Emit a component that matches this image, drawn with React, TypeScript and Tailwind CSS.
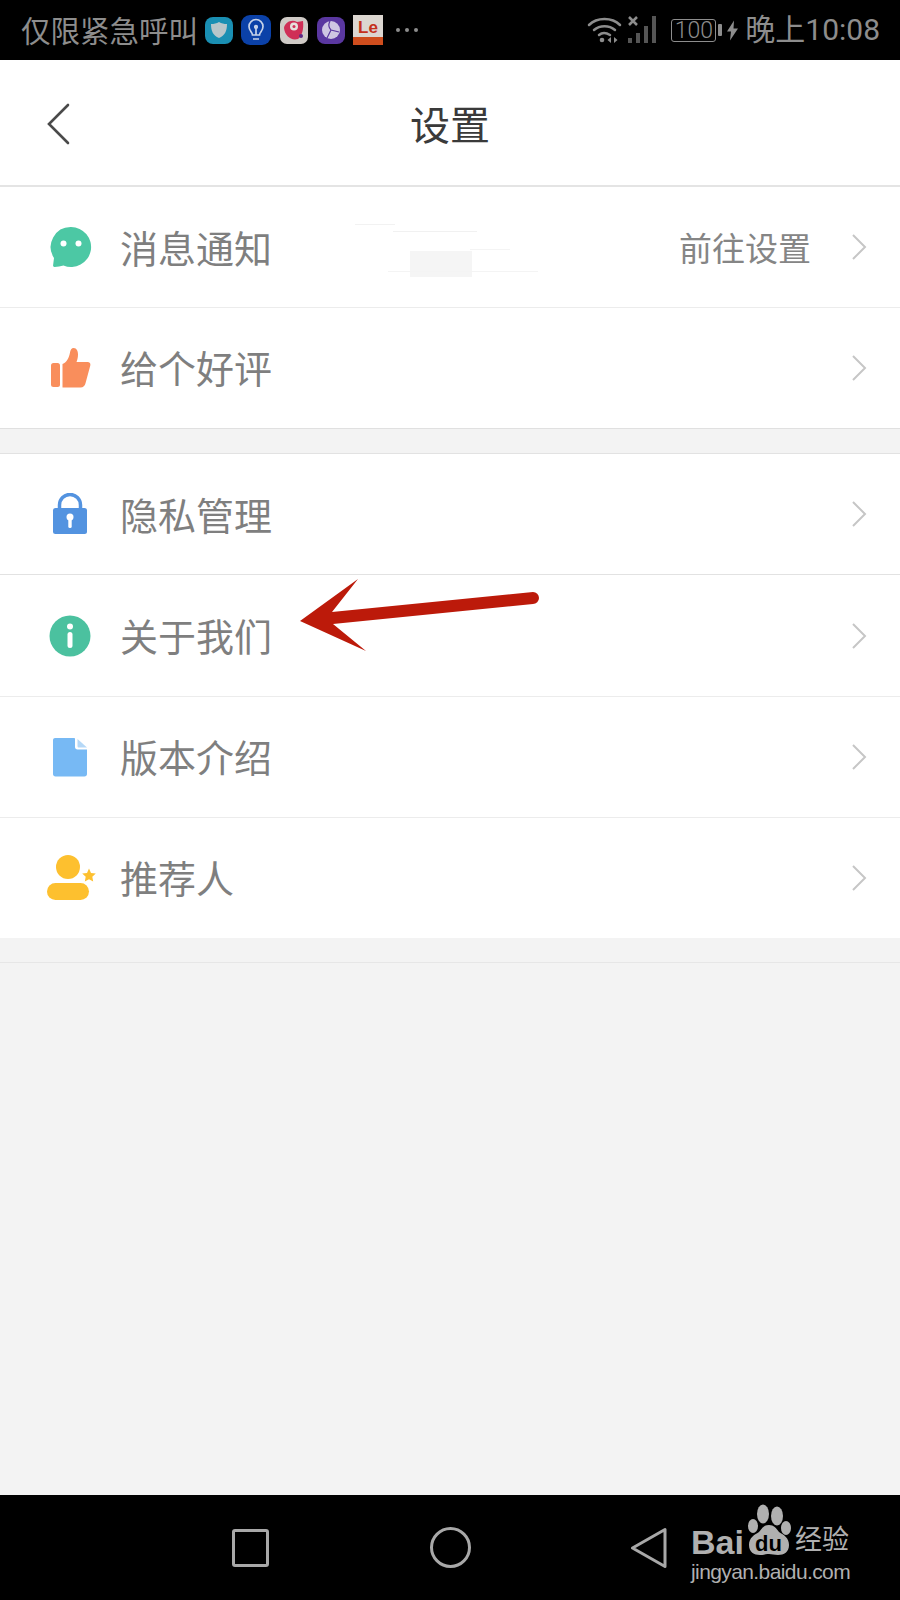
import React from "react";

const cjk = { fontFamily: '"Noto Sans CJK SC", sans-serif' };

function Chevron() {
  return (
    <svg width="16" height="28" viewBox="0 0 16 28" className="shrink-0">
      <path d="M2 2 L14 14 L2 26" fill="none" stroke="#c6c6c6" strokeWidth="2" />
    </svg>
  );
}

function MessageIcon() {
  return (
    <svg width="42" height="42" viewBox="0 0 42 42" className="translate-x-[1px]">
      <path d="M21 1a20 20 0 1 1-7.500 38.500c-3 .8-6 1.300-8.800 1.500-1.200.1-1.800-.7-1.600-1.800l.9-7.200A20 20 0 0 1 21 1z" fill="#4cc8a4" />
      <circle cx="13.500" cy="17.500" r="3" fill="#fff" />
      <circle cx="28.500" cy="17.500" r="3" fill="#fff" />
    </svg>
  );
}

function ThumbIcon() {
  return (
    <svg width="42" height="42" viewBox="0 0 42 42" className="translate-x-[1px]">
      <rect x="1" y="16" width="9" height="24" rx="2.500" fill="#f98e5c" />
      <path d="M12.500 17c4.500-2 6.500-6 7.500-11.500.4-2.500 1.500-4.500 3.700-4.500 3 0 4.300 3 4.300 6.500 0 3-.8 5.500-1.500 7.500h11c2.200 0 3.300 1.500 2.800 3.500l-4.800 17.800c-.6 2.500-2.200 4.200-5 4.200H12.500z" fill="#f98e5c" />
    </svg>
  );
}

function LockIcon() {
  return (
    <svg width="42" height="42" viewBox="0 0 42 42">
      <path d="M10.500 19v-7a10.500 10.500 0 0 1 21 0v7" fill="none" stroke="#5393e0" strokeWidth="3.500" />
      <rect x="4" y="15" width="34" height="26" rx="2.500" fill="#5393e0" />
      <circle cx="21" cy="24" r="3.500" fill="#fff" />
      <rect x="19.300" y="25" width="3.400" height="10" rx="1.500" fill="#fff" />
    </svg>
  );
}

function InfoIcon() {
  return (
    <svg width="42" height="42" viewBox="0 0 42 42">
      <circle cx="21" cy="21" r="20.500" fill="#4bc19f" />
      <circle cx="21" cy="11.500" r="3" fill="#fff" />
      <rect x="18.500" y="17" width="5" height="16" rx="2.500" fill="#fff" />
    </svg>
  );
}

function DocIcon() {
  return (
    <svg width="42" height="42" viewBox="0 0 42 42">
      <path d="M6 2h19c.6 0 1 .4 1 1v8c0 1.500 1 2.500 2.500 2.500H38V38c0 1.500-1 2.500-2.500 2.500h-29C5 40.500 4 39.500 4 38V4c0-1.200 1-2 2-2z" fill="#77b9f4" />
      <path d="M28.500 3 L38 11.500 H30 C29 11.500 28.500 11 28.500 10z" fill="#b5d8f7" />
    </svg>
  );
}

function UserIcon() {
  return (
    <svg width="50" height="48" viewBox="0 0 50 48" className="-ml-[2px] -mr-[6px]">
      <circle cx="21" cy="13" r="12" fill="#fdc02f" />
      <rect x="0" y="29" width="42" height="17" rx="8.500" fill="#fdc02f" />
      <path d="M42 14.500l2 4.400 4.800.6-3.500 3.300.9 4.700-4.200-2.300-4.200 2.300.9-4.700-3.500-3.300 4.800-.6z" fill="#fdc02f" />
    </svg>
  );
}

function Row({
  icon,
  label,
  right,
  border,
  lift,
}: {
  icon: React.ReactNode;
  label: string;
  right?: string;
  border?: string;
  lift?: boolean;
}) {
  return (
    <div className={`flex items-center bg-white pl-[49px] pr-[33px] ${border ?? "h-[121px]"}`}>
      <div className="flex w-[42px] shrink-0 items-center justify-center">{icon}</div>
      <span className={`ml-[29px] flex-1 text-[38px] leading-none text-[#7f7f7f] ${lift ? "-translate-y-[1px]" : ""}`} style={cjk}>
        {label}
      </span>
      {right && (
        <span className="mr-[40px] text-[33px] leading-none text-[#858585]" style={cjk}>
          {right}
        </span>
      )}
      <Chevron />
    </div>
  );
}

function AppIcon({ className, children }: { className: string; children?: React.ReactNode }) {
  return (
    <div className={`flex shrink-0 items-center justify-center overflow-hidden ${className}`}>
      {children}
    </div>
  );
}

function StatusBar() {
  return (
    <div className="flex h-[60px] items-center justify-between bg-black pl-[21px] pr-[20px] text-[#8d8d8d]">
      <div className="flex items-center">
        <span className="text-[29.5px] leading-none" style={cjk}>
          仅限紧急呼叫
        </span>
        <AppIcon className="ml-[7px] h-[27px] w-[28px] rounded-[8px] bg-[#1a8fb3]">
          <svg width="18" height="18" viewBox="0 0 18 18">
            <path d="M9 1c2.500 1.500 5 2 8 2 0 7-2 11.500-8 14C3 14.500 1 10 1 3c3 0 5.500-.5 8-2z" fill="#b9c6ca" />
          </svg>
        </AppIcon>
        <AppIcon className="ml-[8px] h-[30px] w-[30px] rounded-[9px] bg-[#0b41a8]">
          <svg width="22" height="24" viewBox="0 0 22 24" fill="none" stroke="#c6d2e8" strokeWidth="1.700">
            <path d="M7.500 17c0-3-3.500-4-3.500-8.500a7 7 0 0 1 14 0C18 13 14.500 14 14.500 17zM8 21h6" />
            <path d="M11 17v-6" />
            <circle cx="11" cy="9" r="1.300" fill="#c6d2e8" />
          </svg>
        </AppIcon>
        <AppIcon className="ml-[9px] h-[27px] w-[28px] rounded-[7px] bg-[#cfcac6]">
          <svg width="24" height="24" viewBox="0 0 24 24">
            <path d="M2 10c1-6 8-9 13-6l6-1c1 8-1 15-5 18-7 2-13-3-14-11z" fill="#cf2f57" />
            <circle cx="12" cy="8.500" r="4" fill="#e6e0dc" />
            <circle cx="12" cy="8.500" r="1.500" fill="#cf2f57" />
            <circle cx="19" cy="18" r="2" fill="#5b2a86" />
          </svg>
        </AppIcon>
        <AppIcon className="ml-[9px] h-[27px] w-[28px] rounded-[8px] bg-[#5a37a0]">
          <svg width="20" height="20" viewBox="0 0 20 20" fill="none">
            <circle cx="10" cy="10" r="9" fill="#cfc6e2" />
            <path d="M9 1c-2 4-1 7 1 9l8 2M10 10l-4 8" stroke="#5a37a0" strokeWidth="1.200" />
          </svg>
        </AppIcon>
        <div className="ml-[8px] flex h-[30px] w-[30px] shrink-0 flex-col overflow-hidden bg-[#dcd6d0]">
          <span className="flex h-[22px] items-center justify-center pt-[3px] text-[17px] font-bold leading-none text-[#c4301c]" style={{ fontFamily: '"Liberation Sans", sans-serif' }}>
            Le
          </span>
          <div className="h-[8px] bg-[#cf4d1d]" />
        </div>
        <div className="ml-[13px] flex gap-[5px]">
          <div className="h-[4px] w-[4px] rounded-full bg-[#8d8d8d]" />
          <div className="h-[4px] w-[4px] rounded-full bg-[#8d8d8d]" />
          <div className="h-[4px] w-[4px] rounded-full bg-[#8d8d8d]" />
        </div>
      </div>
      <div className="flex items-center">
        <svg width="35" height="28" viewBox="0 0 35 28" fill="none" stroke="#8d8d8d" strokeWidth="2.500" strokeLinecap="round">
          <path d="M2 9c8-8 23-8 31 0" />
          <path d="M7 14c6-5 15-5 21 0" />
          <path d="M12 19c3-2.500 7-2.500 11 0" />
          <circle cx="15" cy="24" r="2.300" fill="#8d8d8d" stroke="none" />
          <path d="M24 21l-3.500 3 3.500 3zM27 21l3.500 3-3.500 3z" fill="#8d8d8d" stroke="none" />
        </svg>
        <svg width="32" height="28" viewBox="0 0 32 28" className="ml-[6px]">
          <path d="M1 1l8 8M9 1l-8 8" stroke="#8d8d8d" strokeWidth="2.500" />
          <rect x="0" y="22" width="4" height="5" fill="#555" />
          <rect x="8" y="17" width="4" height="10" fill="#555" />
          <rect x="16" y="10" width="4" height="17" fill="#555" />
          <rect x="24" y="0" width="4" height="27" fill="#555" />
        </svg>
        <div className="ml-[11px] flex h-[23px] w-[45px] items-center justify-center rounded-[3px] border border-[#8d8d8d] text-[23px] leading-none" style={{ fontFamily: '"Roboto", sans-serif', fontWeight: 300 }}>
          100
        </div>
        <div className="ml-[2px] h-[12px] w-[4px] rounded-[1px] bg-[#8d8d8d]" />
        <svg width="11" height="21" viewBox="0 0 11 20" className="ml-[5px]">
          <path d="M7 0L0 11h4l-1 9 8-12H6.500z" fill="#8d8d8d" />
        </svg>
        <span className="ml-[7px] text-[30px] leading-none" style={{ fontFamily: '"Roboto", "Noto Sans CJK SC", sans-serif' }}>
          晚上10:08
        </span>
      </div>
    </div>
  );
}

function Header() {
  return (
    <div className="relative flex h-[127px] items-center justify-center border-b-2 border-[#e4e4e4] bg-white">
      <svg width="28" height="44" viewBox="0 0 28 44" className="absolute left-[45px] top-[42px]">
        <path d="M23 3 L4 22 L23 41" fill="none" stroke="#4a4a4a" strokeWidth="2.600" strokeLinecap="round" />
      </svg>
      <span className="text-[40px] leading-none text-[#3a3a3a]" style={cjk}>
        设置
      </span>
    </div>
  );
}

function NavBar() {
  return (
    <div className="relative flex h-[105px] items-center bg-black pl-[232px]">
      <div className="h-[38px] w-[37px] rounded-[3px] border-[3px] border-[#a8a8a8]" />
      <div className="ml-[161px] h-[41px] w-[41px] rounded-full border-[3px] border-[#a8a8a8]" />
      <svg width="37" height="42" viewBox="0 0 37 42" className="ml-[160px]">
        <path d="M34 2.500V39.500L1.500 21z" fill="none" stroke="#a8a8a8" strokeWidth="3" strokeLinejoin="round" />
      </svg>
      <div className="absolute left-[691px] top-[8px] h-[78px] w-[165px] text-[#b0b0b0]">
        <span className="absolute left-0 top-[22px] text-[34px] font-bold leading-none" style={{ fontFamily: '"Liberation Sans", sans-serif' }}>
          Bai
        </span>
        <svg width="46" height="52" viewBox="0 0 46 52" className="absolute left-[55px] top-[1px]">
          <ellipse cx="7" cy="22" rx="5" ry="7" fill="#b0b0b0" />
          <ellipse cx="17" cy="10" rx="6" ry="9.500" fill="#b0b0b0" />
          <ellipse cx="31" cy="12" rx="6" ry="9.500" fill="#b0b0b0" />
          <ellipse cx="40" cy="24" rx="5" ry="7" fill="#b0b0b0" />
          <path d="M23 21c5 0 7 3 10 7 5 3 10 6 10 13 0 7-5 10-11 10-4 0-6-1-9-1s-5 1-9 1c-6 0-11-3-11-10 0-7 5-10 10-13 3-4 5-7 10-7z" fill="#b0b0b0" />
        </svg>
        <span className="absolute left-[64px] top-[30px] text-[22px] font-bold leading-none text-black" style={{ fontFamily: '"Liberation Sans", sans-serif' }}>
          du
        </span>
        <span className="absolute left-[104px] top-[21px] text-[27px] leading-none" style={cjk}>
          经验
        </span>
        <span className="absolute left-0 top-[58px] text-[21px] leading-none tracking-[-0.6px]" style={{ fontFamily: '"Liberation Sans", sans-serif' }}>
          jingyan.baidu.com
        </span>
      </div>
    </div>
  );
}

export default function App() {
  return (
    <div className="relative flex h-[1600px] w-[900px] flex-col overflow-hidden bg-[#f3f3f3]">
      <StatusBar />
      <Header />
      <Row icon={<MessageIcon />} label="消息通知" right="前往设置" border="border-b border-[#ececec] h-[121px]" />
      <Row icon={<ThumbIcon />} label="给个好评" border="border-b border-[#e0e0e0] h-[121px]" lift />
      <div className="h-[24px]" />
      <Row icon={<LockIcon />} label="隐私管理" border="border-t border-b border-[#e2e2e2] h-[122px]" />
      <Row icon={<InfoIcon />} label="关于我们" border="border-b border-[#ececec] h-[122px]" lift />
      <Row icon={<DocIcon />} label="版本介绍" border="border-b border-[#ececec] h-[121px]" lift />
      <Row icon={<UserIcon />} label="推荐人" border="h-[120px]" lift />
      <div className="h-[25px] border-b border-[#e6e6e6]" />
      <div className="flex-1" />
      <NavBar />

      {/* smudge over the first row */}
      <div className="absolute left-[410px] top-[251px] h-[26px] w-[62px] bg-[#f5f5f5]" />
      <div className="absolute left-[355px] top-[224px] h-px w-[40px] bg-[#f2f2f2]" />
      <div className="absolute left-[393px] top-[231px] h-px w-[84px] bg-[#f1f1f1]" />
      <div className="absolute left-[388px] top-[271px] h-px w-[150px] bg-[#f4f4f4]" />
      <div className="absolute left-[470px] top-[249px] h-px w-[40px] bg-[#f4f4f4]" />

      {/* annotation arrow */}
      <svg width="260" height="90" viewBox="0 0 260 90" className="absolute left-[290px] top-[570px]">
        <path
          d="M10 51 L68 9 L42 42 L243 22 A6 6 0 0 1 243 34 L43 54 L76 81 Z"
          fill="#bc1a0a"
        />
      </svg>
    </div>
  );
}
